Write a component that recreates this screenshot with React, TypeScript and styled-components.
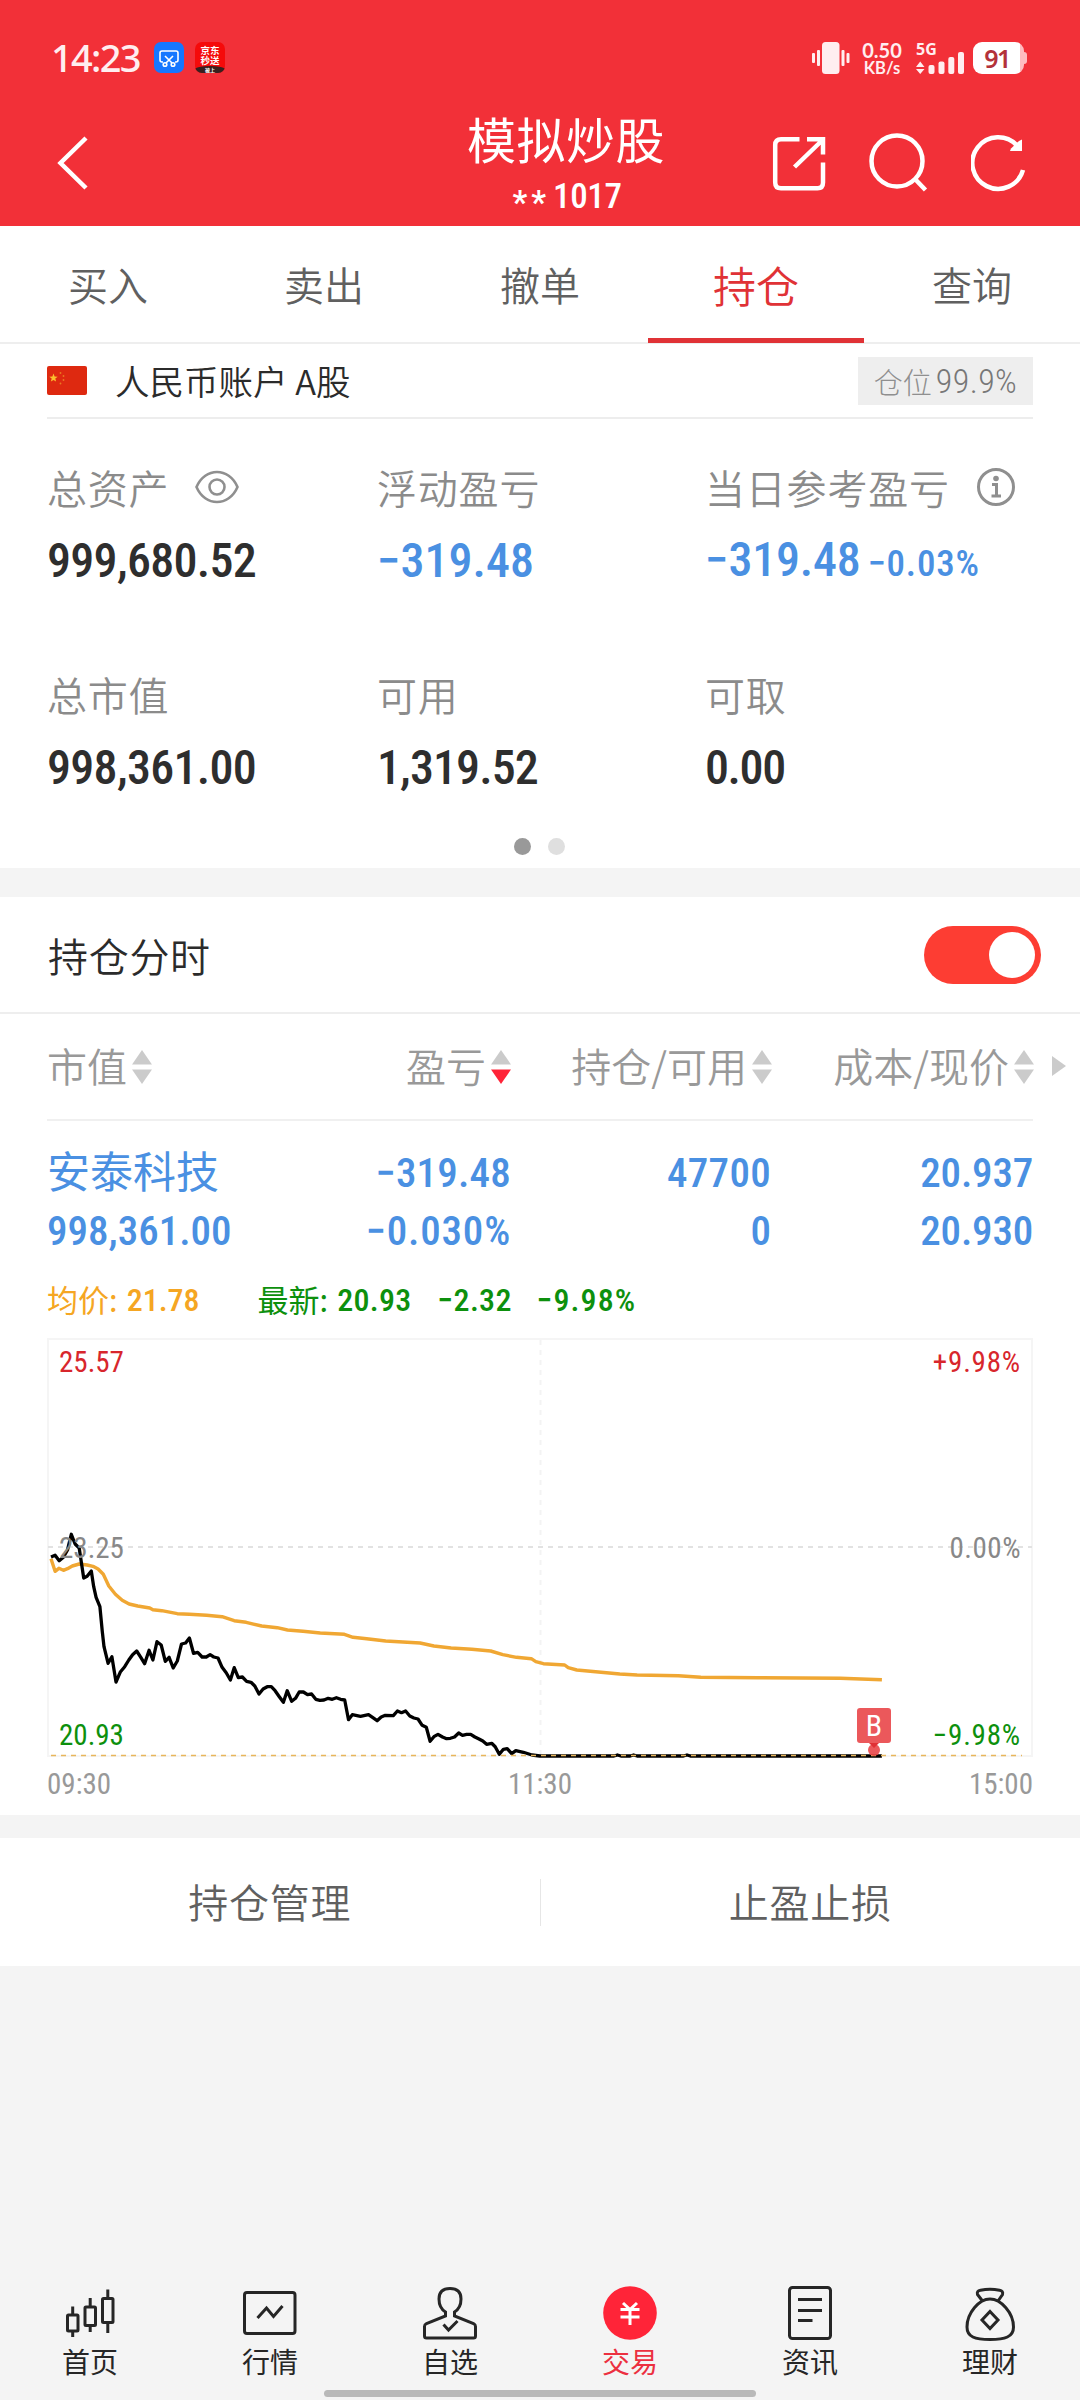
import React from 'react';
import styled, { createGlobalStyle } from 'styled-components';

const CJK = `'Noto Sans CJK SC', sans-serif`;
const DIN = `'Roboto Condensed', 'Roboto', sans-serif`;
const STATUS = `'Noto Sans', sans-serif`;

const GlobalStyle = createGlobalStyle`
  * { box-sizing: border-box; }
  body { margin: 0; background: #f4f4f4; font-family: ${CJK}; }
  svg { display: block; flex: none; }
`;

const Page = styled.div`
  width: 1080px;
  height: 2400px;
  display: flex;
  flex-direction: column;
  background: #f4f4f4;
  overflow: hidden;
`;

const Num = styled.span<{ $size: number; $weight?: number; $color?: string; $gap?: number }>`
  font-family: ${DIN};
  font-stretch: 75%;
  font-size: ${p => p.$size}px;
  font-weight: ${p => p.$weight ?? 500};
  color: ${p => p.$color ?? 'inherit'};
  letter-spacing: ${p => p.$gap ?? 0}px;
  white-space: pre;
`;

/* ---------- header ---------- */

const Header = styled.header`
  height: 226px;
  background: #f23038;
  color: #fff;
  display: flex;
  flex-direction: column;
`;

const StatusBar = styled.div`
  height: 100px;
  padding: 42px 53px 0 51px;
  display: flex;
  align-items: flex-start;
  justify-content: space-between;
`;

const StatusGroup = styled.div`
  display: flex;
  align-items: flex-start;
  height: 32px;
`;

const Clock = styled.span`
  width: 103px;
  font-family: ${STATUS};
  font-size: 38px;
  font-weight: 500;
  line-height: 31px;
  letter-spacing: -1.7px;
  color: #ffeef0;
`;

const AppBadge = styled.span<{ $bg: string }>`
  width: 30px;
  height: 31px;
  margin-right: 11px;
  border-radius: 7px;
  background: ${p => p.$bg};
  overflow: hidden;
  display: flex;
  flex-direction: column;
  align-items: center;
  font-size: 9.5px;
  line-height: 10px;
  font-weight: 700;
  padding-top: 3px;
`;

const BadgeFoot = styled.span`
  width: 30px;
  height: 8px;
  margin-top: 1px;
  background: #38201f;
  border-radius: 50% 50% 0 0 / 3px 3px 0 0;
  font-size: 5px;
  line-height: 8px;
  text-align: center;
`;

const Speed = styled.span`
  width: 44px;
  margin: 0 12px 0 10px;
  display: flex;
  flex-direction: column;
  align-items: center;
  font-family: Lato, sans-serif;
  font-weight: 700;
  color: #ffeef0;
`;

const SpeedLine = styled.span<{ $size: number; $h: number }>`
  font-size: ${p => p.$size}px;
  line-height: ${p => p.$h}px;
`;

const Network = styled.span`
  width: 49px;
  margin-right: 8px;
  display: flex;
  flex-direction: column;
`;

const NetLabel = styled.span`
  height: 10px;
  font-family: ${STATUS};
  font-size: 16px;
  font-weight: 700;
  line-height: 14px;
  color: #ffeef0;
`;

const Battery = styled.span`
  width: 51px;
  height: 32px;
  border-radius: 9px;
  background: linear-gradient(90deg, #fff 47px, #ffbcc0 47px);
  color: #b3323a;
  font-family: ${STATUS};
  font-size: 25px;
  font-weight: 600;
  line-height: 32px;
  letter-spacing: -1.5px;
  text-align: center;
  padding-right: 3px;
`;

const BatteryTip = styled.span`
  width: 3px;
  height: 12px;
  margin-top: 10px;
  border-radius: 0 3px 3px 0;
  background: #ffbcc0;
`;

const TitleBar = styled.div`
  flex: 1;
  display: grid;
  grid-template-columns: 386px 360px 1fr;
`;

const BackCell = styled.div`
  padding: 35px 0 0 56px;
`;

const TitleCell = styled.div`
  padding-top: 8px;
  display: flex;
  flex-direction: column;
  align-items: center;
`;

const Title = styled.h1`
  margin: 0;
  font-size: 49px;
  font-weight: 400;
  line-height: 60px;
  letter-spacing: 0.5px;
`;

const SubTitle = styled.div`
  margin-top: 9px;
  padding-left: 2px;
  line-height: 40px;
  height: 40px;
  display: flex;
  align-items: flex-start;
  gap: 3px;
`;

const Mask = styled.span`
  padding-top: 6px;
`;

const ActionCell = styled.div`
  padding: 33px 0 0 25px;
  display: flex;
  gap: 42px;
`;

/* ---------- tabs ---------- */

const Tabs = styled.nav`
  height: 118px;
  background: #fff;
  border-bottom: 2px solid #eee;
  display: grid;
  grid-template-columns: repeat(5, 1fr);
`;

const Tab = styled.div<{ $active?: boolean }>`
  height: 117px;
  line-height: 116px;
  text-align: center;
  font-size: ${p => (p.$active ? 43 : 40)}px;
  font-weight: 350;
  color: ${p => (p.$active ? '#e03236' : '#606060')};
  border-bottom: ${p => (p.$active ? '5px solid #e03236' : '0')};
`;

/* ---------- account ---------- */

const Account = styled.section`
  height: 524px;
  background: #fff;
  padding: 0 47px;
`;

const AccountHead = styled.div`
  height: 75px;
  border-bottom: 2px solid #ededed;
  display: flex;
  align-items: center;
`;

const AccountName = styled.span`
  flex: 1;
  margin-left: 28px;
  display: flex;
  align-items: center;
  font-size: 34.5px;
  font-weight: 350;
  line-height: 44px;
  padding-bottom: 1px;
  color: #2b2b2b;
`;

const Position = styled.span`
  width: 175px;
  height: 48px;
  background: #eee;
  color: #8f8f8f;
  display: flex;
  align-items: center;
  justify-content: center;
  gap: 4px;
  font-size: 29px;
  font-weight: 300;
`;

const Stats = styled.div`
  padding-top: 38px;
  height: 419px;
  display: grid;
  grid-template-columns: 330px 328px 1fr;
  grid-template-rows: 207px 1fr;
`;

const Stat = styled.div`
  display: flex;
  flex-direction: column;
`;

const StatLabel = styled.div`
  height: 60px;
  display: flex;
  align-items: center;
  font-size: 40px;
  font-weight: 350;
  letter-spacing: 0.8px;
  color: #8b8b8b;
  white-space: nowrap;
`;

const LabelText = styled.span<{ $gap?: number }>`
  margin-right: ${p => p.$gap ?? 0}px;
`;

const StatValue = styled.div<{ $color?: string; $up?: number }>`
  margin-top: ${p => 14 - (p.$up ?? 0)}px;
  height: 60px;
  display: flex;
  align-items: baseline;
  gap: 7px;
  line-height: 60px;
  color: ${p => p.$color ?? '#2e2e2e'};
`;

const Dots = styled.div`
  display: flex;
  justify-content: center;
  gap: 17px;
  padding-right: 2px;
`;

const Dot = styled.span<{ $on?: boolean }>`
  width: 17px;
  height: 17px;
  border-radius: 50%;
  background: ${p => (p.$on ? '#999' : '#dfdfdf')};
`;

/* ---------- holdings ---------- */

const Holdings = styled.section`
  margin-top: 29px;
  height: 918px;
  background: #fff;
`;

const HoldingsHead = styled.div`
  height: 117px;
  padding: 0 39px 0 48px;
  border-bottom: 2px solid #eee;
  display: flex;
  align-items: center;
  justify-content: space-between;
`;

const SectionTitle = styled.h2`
  margin: 0;
  font-size: 40px;
  font-weight: 350;
  letter-spacing: 0.7px;
  color: #2b2b2b;
`;

const Toggle = styled.span`
  width: 117px;
  height: 58px;
  border-radius: 29px;
  background: #fd3d33;
  padding: 6px;
  display: flex;
  justify-content: flex-end;
`;

const Knob = styled.span`
  width: 46px;
  height: 46px;
  border-radius: 50%;
  background: #fff;
`;

const Columns = styled.div`
  margin: 0 14px 0 47px;
  height: 105px;
  display: grid;
  grid-template-columns: 204px 260px 261px 262px 32px;
  align-items: center;
  color: #999;
  font-size: 40px;
  font-weight: 350;
`;

const ColumnHead = styled.div<{ $left?: boolean }>`
  display: flex;
  align-items: center;
  justify-content: ${p => (p.$left ? 'flex-start' : 'flex-end')};
  gap: 5px;
  white-space: nowrap;
`;

const ColumnText = styled.span`
  padding-bottom: 4px;
`;

const MoreCell = styled.div`
  padding-left: 18px;
  padding-bottom: 1px;
`;

const Row = styled.div`
  margin: 0 47px;
  padding-top: 23px;
  height: 152px;
  border-top: 2px solid #f0f0f0;
  display: grid;
  grid-template-columns: 204px 260px 260px 262px;
  color: #4a90e2;
`;

const Cell = styled.div<{ $left?: boolean }>`
  display: flex;
  flex-direction: column;
  align-items: ${p => (p.$left ? 'flex-start' : 'flex-end')};
  line-height: 58px;
`;

const StockName = styled.span`
  height: 58px;
  line-height: 51px;
  font-size: 43px;
  white-space: nowrap;
`;

const Legend = styled.div`
  margin: 0 47px;
  height: 67px;
  padding-top: 5px;
  display: flex;
  align-items: flex-start;
  line-height: 48px;
  font-size: 31px;
`;

const LegendItem = styled.span<{ $color: string; $gap: number }>`
  color: ${p => p.$color};
  margin-right: ${p => p.$gap}px;
  height: 48px;
  display: flex;
  align-items: center;
  gap: 9px;
  white-space: pre;
`;

const LegendName = styled.span`
  padding-bottom: 2px;
`;

const ChartBox = styled.div`
  position: relative;
  margin: 0 47px;
  height: 420px;
`;

const ChartLabel = styled.span<{ $top: number; $right?: boolean }>`
  position: absolute;
  top: ${p => p.$top}px;
  ${p => (p.$right ? 'right: 12px;' : 'left: 12px;')}
  line-height: 36px;
`;

const BuyMark = styled.span`
  position: absolute;
  left: 810px;
  top: 370px;
  width: 34px;
  height: 35px;
  border-radius: 3px;
  background: rgba(232, 65, 68, 0.88);
  color: #fff;
  line-height: 35px;
  text-align: center;
`;

const Axis = styled.div`
  margin: 0 47px;
  height: 52px;
  display: flex;
  justify-content: space-between;
  line-height: 52px;
`;

/* ---------- actions and bottom bar ---------- */

const Actions = styled.section`
  margin-top: 23px;
  height: 128px;
  background: #fff;
  display: flex;
  align-items: center;
`;

const Action = styled.div`
  flex: 1;
  padding-bottom: 3px;
  text-align: center;
  font-size: 40px;
  font-weight: 350;
  letter-spacing: 0.7px;
  color: #606060;
`;

const Divider = styled.span`
  width: 1px;
  height: 47px;
  background: #e6e6e6;
`;

const BottomBar = styled.nav`
  margin-top: auto;
  height: 109px;
  display: grid;
  grid-template-columns: repeat(6, 1fr);
`;

const NavItem = styled.div<{ $active?: boolean }>`
  display: flex;
  flex-direction: column;
  align-items: center;
  font-size: 28px;
  font-weight: 400;
  line-height: 40px;
  color: ${p => (p.$active ? '#ec3040' : '#262626')};
`;

const HomeIndicator = styled.div`
  width: 432px;
  height: 7px;
  margin: 0 auto 3px;
  border-radius: 4px;
  background: #b9b9b9;
`;

/* ---------- icons ---------- */

const BadgeSvg = styled.svg`
  margin-top: 4px;
`;

const ScissorsIcon = () => (
  <BadgeSvg width="20" height="19" viewBox="0 0 20 19" fill="none" stroke="#fff" strokeWidth="1.6">
    <path d="M4 13H3Q1 13 1 11V4Q1 2 3 2H17Q19 2 19 4V11Q19 13 17 13H16M6 7L13 14M14 7L7 14" />
    <circle cx="6" cy="15.5" r="1.8" />
    <circle cx="14" cy="15.5" r="1.8" />
  </BadgeSvg>
);

const VibrateIcon = () => (
  <svg width="38" height="32" viewBox="0 0 38 32" fill="#ffeef0">
    <rect x="10" width="17.5" height="32" rx="3.5" />
    <rect x="0" y="11" width="3" height="10" rx="1" />
    <rect x="5" y="8" width="3" height="16" rx="1" />
    <rect x="29.5" y="8" width="3" height="16" rx="1" />
    <rect x="34.5" y="11" width="3" height="10" rx="1" />
  </svg>
);

const SignalIcon = () => (
  <svg width="49" height="22" viewBox="0 0 49 22" fill="#ffeef0">
    <path d="M0 15L4.2 9.5L8.5 15ZM0 17L4.2 22L8.5 17Z" />
    <rect x="12.5" y="13" width="6" height="9" rx="2" />
    <rect x="22.5" y="9.500" width="6" height="12.500" rx="2" />
    <rect x="32.300" y="5" width="6" height="17" rx="2" />
    <rect x="42" y="0" width="6" height="22" rx="2" />
  </svg>
);

const BackIcon = () => (
  <svg width="36" height="56" viewBox="0 0 36 56" fill="none" stroke="#fff" strokeWidth="4.500">
    <path d="M30 3L4.500 28L30 53" />
  </svg>
);

const ShareIcon = () => (
  <svg width="56" height="62" viewBox="0 0 56 62" fill="none" stroke="#fff" strokeWidth="4.500">
    <path d="M28.500 6.200H10Q4.200 6.200 4.200 12V49.500Q4.200 55.300 10 55.300H46.500Q52 55.300 52 49.500V29.500" />
    <path d="M36 6.200H52V21.500M51 7.500L23.500 34" />
  </svg>
);

const SearchIcon = () => (
  <svg width="60" height="62" viewBox="0 0 60 62" fill="none" stroke="#fff" strokeWidth="4.500">
    <circle cx="28" cy="28" r="25.500" />
    <path d="M45.500 45.500L56.500 57" />
  </svg>
);

const RefreshIcon = () => (
  <svg width="58" height="62" viewBox="0 0 58 62" fill="none" stroke="#fff" strokeWidth="4.500">
    <path d="M52 37A25.800 25.800 0 1 1 46.500 13" />
    <path d="M51 6.500V18H39L40 15.500L48 8Z" fill="#fff" stroke="none" />
  </svg>
);

const FlagIcon = () => (
  <svg width="40" height="29" viewBox="0 0 40 29">
    <rect width="40" height="29" rx="2" fill="#de2910" />
    <path d="M6.500 7.500l1.100 3 3.100.2-2.400 1.900.8 3-2.600-1.700-2.600 1.700.8-3L2.300 10.700l3.100-.2z" fill="#fbc02d" />
    <g fill="#ea7a22">
      <circle cx="13.500" cy="7" r=".9" />
      <circle cx="16.500" cy="10" r=".9" />
      <circle cx="16.500" cy="14" r=".9" />
      <circle cx="13.500" cy="17.500" r=".9" />
    </g>
  </svg>
);

const EyeIcon = () => (
  <svg width="44" height="34" viewBox="0 0 44 34" fill="none" stroke="#8f8f8f" strokeWidth="2.600">
    <path d="M1.500 17C10 -3 34 -3 42.500 17C34 37 10 37 1.500 17Z" />
    <circle cx="22" cy="17" r="7.500" />
  </svg>
);

const InfoIcon = () => (
  <svg width="40" height="40" viewBox="0 0 40 40" fill="none" stroke="#8f8f8f" strokeWidth="3">
    <circle cx="20" cy="20" r="17.500" />
    <circle cx="20" cy="11.500" r="2.800" fill="#8f8f8f" stroke="none" />
    <path d="M16 17.500H20.500V28.500M15.500 29H25" />
  </svg>
);

const SortIcon = ({ active }: { active?: boolean }) => (
  <svg width="20" height="34" viewBox="0 0 20 34">
    <path d="M10 0L20 14.500H0Z" fill="#cbcbcb" />
    <path d="M0 19.500H20L10 34Z" fill={active ? '#ff2438' : '#cbcbcb'} />
  </svg>
);

const MoreIcon = () => (
  <svg width="14" height="20" viewBox="0 0 14 20">
    <path d="M0 0L14 10L0 20Z" fill="#cbcbcb" />
  </svg>
);

const NavSvg = ({ children }: { children: React.ReactNode }) => (
  <svg width="60" height="60" viewBox="0 0 60 60" fill="none" stroke="#262626" strokeWidth="3">
    {children}
  </svg>
);

const CandlesIcon = () => (
  <NavSvg>
    <rect x="7.500" y="34" width="10.500" height="16" rx="1" />
    <rect x="25" y="26" width="10.500" height="18.500" rx="1" />
    <rect x="42.500" y="17.500" width="10.500" height="24" rx="1" />
    <path d="M12.700 25.500V34M12.700 50V56M30.200 17V26M30.200 44.500V51M47.800 8.500V17.500M47.800 41.500V52" />
  </NavSvg>
);

const MarketIcon = () => (
  <NavSvg>
    <rect x="4.500" y="11.500" width="50.500" height="41" rx="2.500" />
    <path d="M17.500 37L26.500 27L33.500 35.500L42.500 25" />
  </NavSvg>
);

const PersonIcon = () => (
  <NavSvg>
    <path d="M25.500 31V35L6.500 42.500Q4.500 43.500 4.500 45.500V55Q4.500 57 6.500 57H53.500Q55.500 57 55.500 55V45.500Q55.500 43.500 53.500 42.500L34.500 35V31Q41 27 41 18Q41 7.500 30 7.500T19 18Q19 27 25.500 31Z" />
    <path d="M23.500 43.500L28.500 49L37.500 40" />
  </NavSvg>
);

const TradeIcon = () => (
  <NavSvg>
    <circle cx="30" cy="32" r="26.800" fill="#ff2438" stroke="none" />
    <path d="M23 22L30 28.500L37 22M20.500 28.500H39.500M20.500 36H39.500M30 28.500V44" stroke="#fff" />
  </NavSvg>
);

const NewsIcon = () => (
  <NavSvg>
    <rect x="9.500" y="6.500" width="41" height="51" rx="3" />
    <path d="M18 18.500H42M18 29.500H42M18 39.500H32.500" />
  </NavSvg>
);

const WealthIcon = () => (
  <NavSvg>
    <path d="M22.500 20L17.500 13.500Q16.500 10 20.500 9.200Q30 7.500 39.500 9.200Q43.500 10 42.500 13.500L38 20" />
    <path d="M30 18C41 18 53.500 32 53.500 46C53.500 56 45 58.500 30 58.500S7 56 7 46C7 32 19 18 30 18Z" />
    <path d="M30 30.500L38 39L30 47.500L22 39Z" />
  </NavSvg>
);

/* ---------- intraday chart ---------- */

type Point = [number, number];

/* Samples are stored on a 2.904 x 3 grid, with y measured from 142px below the chart top. */
const toPoints = (series: Point[]) =>
  series.map(([x, y]) => `${(x / 2.904 - 47).toFixed(1)},${(y / 3 + 142).toFixed(1)}`).join(' ');

const PRICE: Point[] = [
  [148, 231], [160, 226], [172, 242], [184, 232], [196, 210], [207, 163], [218, 192], [230, 204], [243, 294], [253, 289],
  [265, 273], [272, 320], [279, 352], [290, 380], [297, 455], [302, 500], [314, 550], [325, 530], [337, 606], [350, 575],
  [362, 560], [374, 540], [385, 524], [397, 513], [409, 532], [420, 551], [433, 511], [444, 540], [456, 485], [468, 495],
  [480, 544], [491, 532], [503, 564], [515, 543], [527, 492], [539, 489], [550, 474], [562, 520], [574, 517], [587, 531],
  [599, 531], [610, 524], [621, 531], [633, 534], [645, 562], [657, 578], [669, 600], [680, 563], [692, 593], [704, 591],
  [716, 604], [729, 607], [740, 618], [752, 642], [764, 627], [776, 620], [788, 620], [799, 632], [811, 650], [823, 667],
  [834, 632], [847, 664], [858, 655], [869, 636], [881, 636], [893, 644], [905, 642], [917, 658], [929, 661], [941, 660],
  [953, 655], [965, 658], [977, 653], [989, 658], [1001, 660], [1012, 719], [1023, 704], [1047, 709], [1070, 704],
  [1083, 713], [1095, 722], [1107, 711], [1119, 706], [1142, 707], [1154, 693], [1166, 698], [1178, 693], [1190, 708],
  [1202, 714], [1214, 717], [1226, 736], [1238, 742], [1249, 784], [1260, 770], [1272, 763], [1285, 771], [1297, 776],
  [1308, 775], [1320, 771], [1332, 759], [1343, 766], [1355, 763], [1367, 763], [1379, 771], [1391, 777], [1402, 783],
  [1413, 793], [1428, 790], [1438, 800], [1450, 823], [1462, 808], [1473, 806], [1486, 821], [1498, 812], [1520, 817],
  [1545, 825], [1568, 828], [1783, 828], [1793, 825], [1803, 828], [1830, 828], [1840, 825], [1850, 828], [1985, 828],
  [1995, 825], [2005, 828], [2561, 828],
];

const AVERAGE: Point[] = [
  [148, 236], [160, 274], [171, 265], [184, 271], [196, 266], [210, 258], [230, 252], [253, 255], [270, 259], [285, 267],
  [300, 283], [316, 318], [335, 343], [355, 361], [375, 372], [400, 378], [435, 384], [444, 389], [470, 392], [515, 401],
  [550, 403], [600, 406], [645, 410], [680, 422], [715, 427], [760, 438], [805, 443], [835, 450], [880, 454], [930, 459],
  [1000, 463], [1025, 472], [1065, 476], [1120, 483], [1170, 486], [1220, 489], [1260, 498], [1310, 504], [1370, 508],
  [1425, 513], [1460, 524], [1500, 532], [1543, 536], [1556, 545], [1578, 551], [1640, 555], [1650, 563], [1675, 570],
  [1730, 575], [1800, 582], [1850, 585], [1970, 587], [2035, 592], [2200, 593], [2440, 595], [2561, 599],
];

const Chart = () => (
  <svg width="986" height="420" viewBox="0 0 986 420" fill="none">
    <rect x="1" y="1" width="984" height="417" stroke="#f5f5f5" strokeWidth="2" />
    <path d="M1 209H985" stroke="#e2e2e2" strokeWidth="2" strokeDasharray="5 5" />
    <path d="M493.500 2V418" stroke="#f3f3f3" strokeWidth="2" strokeDasharray="5 5" />
    <polyline points={toPoints(AVERAGE)} stroke="#f0a733" strokeWidth="3.400" strokeLinejoin="round" />
    <polyline points={toPoints(PRICE)} stroke="#000" strokeWidth="3.300" strokeLinejoin="round" />
    <path d="M4 417.500H975" stroke="#e8b65c" strokeWidth="1.600" strokeDasharray="5 5" />
    <circle cx="827" cy="412" r="6" fill="#e84144" fillOpacity="0.88" />
    <path d="M822 405H832L827 410Z" fill="#e03035" />
  </svg>
);

const BLUE = '#4a90e2';

const NAV = [
  { label: '首页', icon: <CandlesIcon /> },
  { label: '行情', icon: <MarketIcon /> },
  { label: '自选', icon: <PersonIcon /> },
  { label: '交易', icon: <TradeIcon />, active: true },
  { label: '资讯', icon: <NewsIcon /> },
  { label: '理财', icon: <WealthIcon /> },
];

export default function App() {
  return (
    <Page>
      <GlobalStyle />
      <Header>
        <StatusBar>
          <StatusGroup>
            <Clock>14:23</Clock>
            <AppBadge $bg="#1677ff"><ScissorsIcon /></AppBadge>
            <AppBadge $bg="#f50a0a">
              <span>京东</span>
              <span>秒送</span>
              <BadgeFoot>被上</BadgeFoot>
            </AppBadge>
          </StatusGroup>
          <StatusGroup>
            <VibrateIcon />
            <Speed>
              <SpeedLine $size={20} $h={16}>0.50</SpeedLine>
              <SpeedLine $size={16.5} $h={21}>KB/s</SpeedLine>
            </Speed>
            <Network>
              <NetLabel>5G</NetLabel>
              <SignalIcon />
            </Network>
            <Battery>91</Battery>
            <BatteryTip />
          </StatusGroup>
        </StatusBar>
        <TitleBar>
          <BackCell><BackIcon /></BackCell>
          <TitleCell>
            <Title>模拟炒股</Title>
            <SubTitle>
              <Mask><Num $size={33} $weight={600} $gap={4}>**</Num></Mask>
              <Num $size={35} $gap={-0.4}>1017</Num>
            </SubTitle>
          </TitleCell>
          <ActionCell>
            <ShareIcon />
            <SearchIcon />
            <RefreshIcon />
          </ActionCell>
        </TitleBar>
      </Header>

      <Tabs>
        <Tab>买入</Tab>
        <Tab>卖出</Tab>
        <Tab>撤单</Tab>
        <Tab $active>持仓</Tab>
        <Tab>查询</Tab>
      </Tabs>

      <Account>
        <AccountHead>
          <FlagIcon />
          <AccountName>人民币账户 A股</AccountName>
          <Position>
            <span>仓位</span>
            <Num $size={34} $weight={350} $gap={0.4} $color="#777">99.9%</Num>
          </Position>
        </AccountHead>
        <Stats>
          <Stat>
            <StatLabel><LabelText $gap={26}>总资产</LabelText><EyeIcon /></StatLabel>
            <StatValue><Num $size={48} $gap={-0.7}>999,680.52</Num></StatValue>
          </Stat>
          <Stat>
            <StatLabel>浮动盈亏</StatLabel>
            <StatValue $color={BLUE}><Num $size={48}>−319.48</Num></StatValue>
          </Stat>
          <Stat>
            <StatLabel><LabelText $gap={26}>当日参考盈亏</LabelText><InfoIcon /></StatLabel>
            <StatValue $color={BLUE} $up={1}>
              <Num $size={48} $gap={-0.2}>−319.48</Num>
              <Num $size={37} $gap={0.8}>−0.03%</Num>
            </StatValue>
          </Stat>
          <Stat>
            <StatLabel>总市值</StatLabel>
            <StatValue><Num $size={48} $gap={-0.7}>998,361.00</Num></StatValue>
          </Stat>
          <Stat>
            <StatLabel>可用</StatLabel>
            <StatValue><Num $size={48} $gap={-0.9}>1,319.52</Num></StatValue>
          </Stat>
          <Stat>
            <StatLabel>可取</StatLabel>
            <StatValue><Num $size={48} $gap={-1.4}>0.00</Num></StatValue>
          </Stat>
        </Stats>
        <Dots><Dot $on /><Dot /></Dots>
      </Account>

      <Holdings>
        <HoldingsHead>
          <SectionTitle>持仓分时</SectionTitle>
          <Toggle><Knob /></Toggle>
        </HoldingsHead>
        <Columns>
          <ColumnHead $left><ColumnText>市值</ColumnText><SortIcon /></ColumnHead>
          <ColumnHead><ColumnText>盈亏</ColumnText><SortIcon active /></ColumnHead>
          <ColumnHead><ColumnText>持仓/可用</ColumnText><SortIcon /></ColumnHead>
          <ColumnHead><ColumnText>成本/现价</ColumnText><SortIcon /></ColumnHead>
          <MoreCell><MoreIcon /></MoreCell>
        </Columns>
        <Row>
          <Cell $left>
            <StockName>安泰科技</StockName>
            <Num $size={41}>998,361.00</Num>
          </Cell>
          <Cell>
            <Num $size={41} $gap={0.2}>−319.48</Num>
            <Num $size={41} $gap={0.8}>−0.030%</Num>
          </Cell>
          <Cell>
            <Num $size={41} $gap={0.3}>47700</Num>
            <Num $size={41}>0</Num>
          </Cell>
          <Cell>
            <Num $size={41} $gap={-0.2}>20.937</Num>
            <Num $size={41} $gap={-0.2}>20.930</Num>
          </Cell>
        </Row>
        <Legend>
          <LegendItem $color="#f5a623" $gap={58}><LegendName>均价:</LegendName><Num $size={32}>21.78</Num></LegendItem>
          <LegendItem $color="#0d900d" $gap={26}><LegendName>最新:</LegendName><Num $size={32} $gap={0.3}>20.93</Num></LegendItem>
          <LegendItem $color="#0d900d" $gap={25}><Num $size={32} $gap={0.3}>−2.32</Num></LegendItem>
          <LegendItem $color="#0d900d" $gap={0}><Num $size={32} $gap={1.1}>−9.98%</Num></LegendItem>
        </Legend>
        <ChartBox>
          <Chart />
          <ChartLabel $top={6}><Num $size={29} $weight={450} $color="#d8262c">25.57</Num></ChartLabel>
          <ChartLabel $top={6} $right><Num $size={29} $weight={450} $gap={0.8} $color="#d8262c">+9.98%</Num></ChartLabel>
          <ChartLabel $top={192}><Num $size={29} $weight={450} $color="#888">23.25</Num></ChartLabel>
          <ChartLabel $top={192} $right><Num $size={29} $weight={450} $gap={0.5} $color="#888">0.00%</Num></ChartLabel>
          <ChartLabel $top={379}><Num $size={29} $weight={450} $color="#0d900d">20.93</Num></ChartLabel>
          <ChartLabel $top={379} $right><Num $size={29} $weight={450} $gap={0.8} $color="#0d900d">−9.98%</Num></ChartLabel>
          <BuyMark><Num $size={30} $weight={400}>B</Num></BuyMark>
        </ChartBox>
        <Axis>
          <Num $size={29} $weight={450} $color="#999">09:30</Num>
          <Num $size={29} $weight={450} $color="#999">11:30</Num>
          <Num $size={29} $weight={450} $color="#999">15:00</Num>
        </Axis>
      </Holdings>

      <Actions>
        <Action>持仓管理</Action>
        <Divider />
        <Action>止盈止损</Action>
      </Actions>

      <BottomBar>
        {NAV.map(n => (
          <NavItem key={n.label} $active={n.active}>
            {n.icon}
            <span>{n.label}</span>
          </NavItem>
        ))}
      </BottomBar>
      <HomeIndicator />
    </Page>
  );
}
